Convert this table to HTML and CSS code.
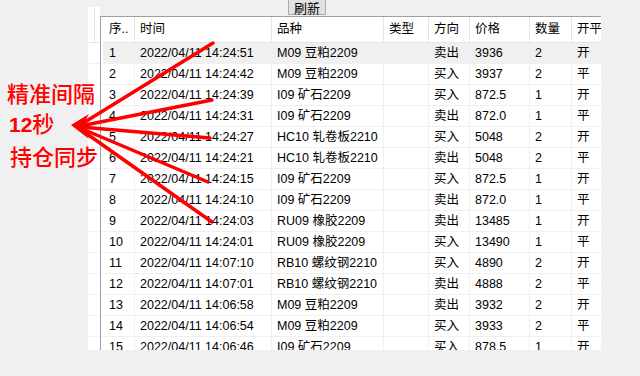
FILE: index.html
```html
<!DOCTYPE html>
<html lang="zh">
<head>
<meta charset="utf-8">
<title>持仓同步</title>
<link rel="stylesheet" href="styles.css">
</head>
<body>
<div class="page">
  <div class="spacer"></div>
  <div class="side-list">
    <div class="side-head"><span class="side-col"></span></div>
    <div class="side-row"></div><div class="side-row"></div><div class="side-row"></div><div class="side-row"></div><div class="side-row"></div>
    <div class="side-row"></div><div class="side-row"></div><div class="side-row"></div><div class="side-row"></div><div class="side-row"></div>
    <div class="side-row"></div><div class="side-row"></div><div class="side-row"></div><div class="side-row"></div><div class="side-row"></div>
  </div>
  <div class="right">
    <div class="toolbar"><button class="btn">刷新</button></div>
    <div class="grid">
      <div class="row head">
        <div class="c first">序..</div><div class="c">时间</div><div class="c">品种</div><div class="c">类型</div><div class="c">方向</div><div class="c">价格</div><div class="c">数量</div><div class="c">开平</div>
      </div>
      <div class="row sel"><div class="c first">1</div><div class="c">2022/04/11 14:24:51</div><div class="c">M09 豆粕2209</div><div class="c"></div><div class="c">卖出</div><div class="c">3936</div><div class="c">2</div><div class="c">开</div></div>
      <div class="row"><div class="c first">2</div><div class="c">2022/04/11 14:24:42</div><div class="c">M09 豆粕2209</div><div class="c"></div><div class="c">买入</div><div class="c">3937</div><div class="c">2</div><div class="c">平</div></div>
      <div class="row"><div class="c first">3</div><div class="c">2022/04/11 14:24:39</div><div class="c">I09 矿石2209</div><div class="c"></div><div class="c">买入</div><div class="c">872.5</div><div class="c">1</div><div class="c">开</div></div>
      <div class="row"><div class="c first">4</div><div class="c">2022/04/11 14:24:31</div><div class="c">I09 矿石2209</div><div class="c"></div><div class="c">卖出</div><div class="c">872.0</div><div class="c">1</div><div class="c">平</div></div>
      <div class="row"><div class="c first">5</div><div class="c">2022/04/11 14:24:27</div><div class="c">HC10 轧卷板2210</div><div class="c"></div><div class="c">买入</div><div class="c">5048</div><div class="c">2</div><div class="c">开</div></div>
      <div class="row"><div class="c first">6</div><div class="c">2022/04/11 14:24:21</div><div class="c">HC10 轧卷板2210</div><div class="c"></div><div class="c">卖出</div><div class="c">5048</div><div class="c">2</div><div class="c">平</div></div>
      <div class="row"><div class="c first">7</div><div class="c">2022/04/11 14:24:15</div><div class="c">I09 矿石2209</div><div class="c"></div><div class="c">买入</div><div class="c">872.5</div><div class="c">1</div><div class="c">开</div></div>
      <div class="row"><div class="c first">8</div><div class="c">2022/04/11 14:24:10</div><div class="c">I09 矿石2209</div><div class="c"></div><div class="c">卖出</div><div class="c">872.0</div><div class="c">1</div><div class="c">平</div></div>
      <div class="row"><div class="c first">9</div><div class="c">2022/04/11 14:24:03</div><div class="c">RU09 橡胶2209</div><div class="c"></div><div class="c">卖出</div><div class="c">13485</div><div class="c">1</div><div class="c">开</div></div>
      <div class="row"><div class="c first">10</div><div class="c">2022/04/11 14:24:01</div><div class="c">RU09 橡胶2209</div><div class="c"></div><div class="c">买入</div><div class="c">13490</div><div class="c">1</div><div class="c">平</div></div>
      <div class="row"><div class="c first">11</div><div class="c">2022/04/11 14:07:10</div><div class="c">RB10 螺纹钢2210</div><div class="c"></div><div class="c">买入</div><div class="c">4890</div><div class="c">2</div><div class="c">开</div></div>
      <div class="row"><div class="c first">12</div><div class="c">2022/04/11 14:07:01</div><div class="c">RB10 螺纹钢2210</div><div class="c"></div><div class="c">卖出</div><div class="c">4888</div><div class="c">2</div><div class="c">平</div></div>
      <div class="row"><div class="c first">13</div><div class="c">2022/04/11 14:06:58</div><div class="c">M09 豆粕2209</div><div class="c"></div><div class="c">卖出</div><div class="c">3932</div><div class="c">2</div><div class="c">开</div></div>
      <div class="row"><div class="c first">14</div><div class="c">2022/04/11 14:06:54</div><div class="c">M09 豆粕2209</div><div class="c"></div><div class="c">买入</div><div class="c">3933</div><div class="c">2</div><div class="c">平</div></div>
      <div class="row"><div class="c first">15</div><div class="c">2022/04/11 14:06:46</div><div class="c">I09 矿石2209</div><div class="c"></div><div class="c">买入</div><div class="c">878.5</div><div class="c">1</div><div class="c">开</div></div>
    </div>
  </div>
</div>

<div class="note">
  <div class="note-line l1">精准间隔</div>
  <div class="note-line l2"><b class="num">12</b>秒</div>
  <div class="note-line l3">持仓同步</div>
</div>

<svg class="arrows" width="640" height="376" viewBox="0 0 640 376">
  <g stroke="#ff0000" stroke-width="3.5" stroke-linecap="round" fill="none">
    <line x1="80" y1="125" x2="213" y2="43"/>
    <line x1="80" y1="126" x2="212" y2="100"/>
    <line x1="80" y1="127" x2="210" y2="138"/>
    <line x1="80" y1="128" x2="208" y2="182"/>
    <line x1="80" y1="129" x2="212" y2="222"/>
  </g>
  <polygon points="71,125 89,114 82,126 89,139" fill="#ff0000"/>
</svg>
</body>
</html>
```

FILE: styles.css
```css
html, body {
  margin: 0;
  padding: 0;
}
body {
  width: 640px;
  height: 376px;
  overflow: hidden;
  background: #f0f0f0;
  font-family: "Liberation Sans", "Noto Sans CJK SC", sans-serif;
  font-size: 12.5px;
  color: #000;
  position: relative;
}
.page {
  display: flex;
  align-items: flex-start;
  height: 350px;
}
.spacer {
  width: 88px;
  flex: none;
}
.side-list {
  width: 12px;
  flex: none;
  margin-top: 7px;
  height: 343px;
  background: #fff;
  overflow: hidden;
}
.side-head {
  height: 35px;
  border-bottom: 1px solid #e5e5e5;
  display: flex;
}
.side-col {
  width: 6px;
  border-right: 1px solid #e5e5e5;
}
.side-row {
  height: 20px;
  border-bottom: 1px solid #f0f0f0;
}
.right {
  width: 501px;
  flex: none;
  display: flex;
  flex-direction: column;
}
.toolbar {
  height: 16px;
  display: flex;
}
.btn {
  margin: -1px 0 0 188px;
  width: 38px;
  height: 16px;
  padding: 0;
  border: 1px solid #adadad;
  background: #e1e1e1;
  font-family: "Noto Sans CJK SC", sans-serif;
  font-size: 13px;
  line-height: 13px;
  color: #000;
}
.grid {
  height: 333px;
  border-top: 1px solid #a0a0a0;
  border-left: 1px solid #a0a0a0;
  padding-left: 2px;
  background: #fff;
  overflow: hidden;
}
.row {
  display: grid;
  grid-template-columns: 32px 137px 112px 45px 41px 60px 42px 60px;
  height: 21px;
  border-bottom: 1px solid #f0f0f0;
  box-sizing: border-box;
  width: 529px;
}
.row.head {
  height: 26px;
  border-bottom: 1px solid #e5e5e5;
}
.row.sel {
  background: #f0f0f0;
}
.c {
  box-sizing: border-box;
  border-right: 1px solid #f0f0f0;
  padding-left: 5px;
  line-height: 20px;
  white-space: nowrap;
  overflow: hidden;
}
.c.first {
  padding-left: 6px;
}
.head .c {
  line-height: 25px;
  border-right-color: #e5e5e5;
}
.sel .c {
  border-right-color: #f0f0f0;
}
.note {
  position: absolute;
  left: 0;
  top: 77px;
  color: #ff0000;
  font-family: "Noto Sans CJK SC", sans-serif;
  font-size: 22px;
  font-weight: 500;
  line-height: 30px;
}
.note-line {
  white-space: nowrap;
}
.l1 { padding-left: 7px; }
.l2 { padding-left: 9px; }
.l3 { padding-left: 10px; }
.num {
  font-family: "Liberation Sans", sans-serif;
  font-weight: bold;
  font-size: 21px;
}
.arrows {
  position: absolute;
  left: 0;
  top: 0;
  pointer-events: none;
}
```
